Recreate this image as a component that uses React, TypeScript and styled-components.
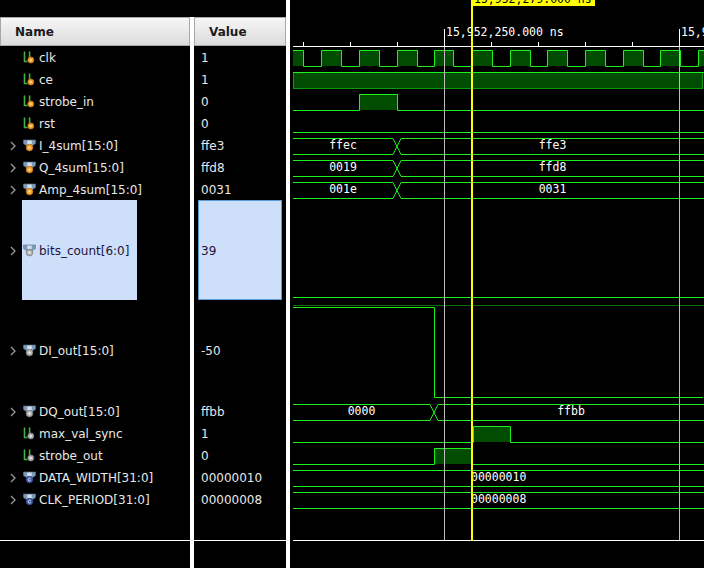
import React from 'react';
import styled, { createGlobalStyle } from 'styled-components';

const GlobalStyle = createGlobalStyle`
  html, body { margin: 0; padding: 0; background: #000; }
  body { font-family: 'DejaVu Sans', 'Liberation Sans', sans-serif; }
`;

type Kind = 'bitIn' | 'bitInt' | 'busIn' | 'busInt' | 'param';
interface Sig {
  name: string;
  value: string;
  kind: Kind;
  tall?: boolean;
  selected?: boolean;
}

const signals: Sig[] = [
  { name: 'clk', value: '1', kind: 'bitIn' },
  { name: 'ce', value: '1', kind: 'bitIn' },
  { name: 'strobe_in', value: '0', kind: 'bitIn' },
  { name: 'rst', value: '0', kind: 'bitIn' },
  { name: 'I_4sum[15:0]', value: 'ffe3', kind: 'busIn' },
  { name: 'Q_4sum[15:0]', value: 'ffd8', kind: 'busIn' },
  { name: 'Amp_4sum[15:0]', value: '0031', kind: 'busIn' },
  { name: 'bits_count[6:0]', value: '39', kind: 'busInt', tall: true, selected: true },
  { name: 'DI_out[15:0]', value: '-50', kind: 'busInt', tall: true },
  { name: 'DQ_out[15:0]', value: 'ffbb', kind: 'busInt' },
  { name: 'max_val_sync', value: '1', kind: 'bitInt' },
  { name: 'strobe_out', value: '0', kind: 'bitInt' },
  { name: 'DATA_WIDTH[31:0]', value: '00000010', kind: 'param' },
  { name: 'CLK_PERIOD[31:0]', value: '00000008', kind: 'param' },
];

const Page = styled.div`
  display: flex;
  width: 704px;
  height: 568px;
  background: #000;
  overflow: hidden;
`;

const Column = styled.div<{ $width: number }>`
  display: flex;
  flex-direction: column;
  flex: none;
  width: ${(p) => p.$width}px;
  padding-top: 17px;
  box-sizing: border-box;
`;

const HeaderCell = styled.div`
  height: 29px;
  box-sizing: border-box;
  border: 1px solid #a8a8a8;
  background: linear-gradient(#f6f6f6, #dcdcdc);
  display: flex;
  align-items: center;
  padding-left: 14px;
  font-weight: bold;
  font-size: 12px;
  color: #1a1a1a;
`;

const Divider = styled.div<{ $top: number }>`
  flex: none;
  width: 4px;
  margin-top: ${(p) => p.$top}px;
  background: #ffffff;
`;

const NameRow = styled.div<{ $h: number }>`
  display: flex;
  align-items: stretch;
  height: ${(p) => p.$h}px;
  padding-left: 9px;
`;

const Expander = styled.div`
  flex: none;
  width: 13px;
  display: flex;
  align-items: center;
  padding-top: 2px;
  box-sizing: border-box;
  svg { margin-left: 1px; }
`;

const NameLabel = styled.div<{ $selected?: boolean }>`
  display: flex;
  align-items: center;
  gap: 3px;
  padding: 2px 8px 0 1px;
  background: ${(p) => (p.$selected ? '#cddff9' : 'transparent')};
  color: ${(p) => (p.$selected ? '#1e1440' : '#e8e8e8')};
  font-size: 12px;
  white-space: nowrap;
  svg { flex: none; margin-top: -2px; }
`;

const ValueRow = styled.div<{ $h: number }>`
  display: flex;
  height: ${(p) => p.$h}px;
  padding: 0 4px;
`;

const ValueBox = styled.div<{ $selected?: boolean }>`
  flex: 1;
  display: flex;
  align-items: center;
  padding: 2px 0 0 2px;
  border: 1px solid ${(p) => (p.$selected ? '#5a9bd6' : 'transparent')};
  background: ${(p) => (p.$selected ? '#cddff9' : 'transparent')};
  color: ${(p) => (p.$selected ? '#1e1440' : '#e8e8e8')};
  font-size: 12px;
  white-space: nowrap;
`;

const BottomRule = styled.div`
  margin-top: 30px;
  height: 1px;
  background: #ffffff;
`;

const WavePane = styled.div`
  flex: 1;
  svg { display: block; }
`;

const WaveText = styled.text<{ $color?: string }>`
  font-family: 'DejaVu Sans Mono', 'Liberation Mono', monospace;
  font-size: 11.5px;
  fill: ${(p) => p.$color || '#ffffff'};
`;

const dots = {
  orange: { fill: '#f4a232', stroke: '#c9740e', inner: '#ffe0a0' },
  gray: { fill: '#b4b4b4', stroke: '#7c7c7c', inner: '#eeeeee' },
};

function SignalIcon({ kind }: { kind: Kind }) {
  if (kind === 'bitIn' || kind === 'bitInt') {
    const d = kind === 'bitIn' ? dots.orange : dots.gray;
    return (
      <svg width="13" height="13" viewBox="0 0 13 13">
        <path d="M1.5 0.5 V10.5 H4.5" stroke="#45b045" strokeWidth="1.6" fill="none" />
        <path d="M6.6 0.5 V6" stroke="#45b045" strokeWidth="1.6" fill="none" />
        <circle cx="7.8" cy="9" r="3" fill={d.fill} stroke={d.stroke} strokeWidth="0.8" />
        <circle cx="7.8" cy="9" r="1.1" fill={d.inner} />
      </svg>
    );
  }
  const d = kind === 'busIn' ? dots.orange : dots.gray;
  return (
    <svg width="13" height="13" viewBox="0 0 13 13">
      <path d="M0.5 1 H12.5 V4.6 L9.6 6.6 H3.4 L0.5 4.6 Z" fill="#7d9ab8" stroke="#5b7896" strokeWidth="0.6" />
      <rect x="4.3" y="1.6" width="4.4" height="3.4" fill="#d4e0ec" />
      {kind === 'param' ? (
        <>
          <circle cx="6.5" cy="8.6" r="3.3" fill="#4262aa" stroke="#2b458a" strokeWidth="0.7" />
          <path d="M7.7 7.8 A1.4 1.4 0 1 0 7.7 9.5" stroke="#e4ecff" strokeWidth="0.9" fill="none" />
        </>
      ) : (
        <>
          <circle cx="6.5" cy="8.6" r="3.3" fill={d.fill} stroke={d.stroke} strokeWidth="0.8" />
          <circle cx="6.5" cy="8.6" r="1.2" fill={d.inner} />
        </>
      )}
    </svg>
  );
}

function Chevron() {
  return (
    <svg width="6" height="10" viewBox="0 0 6 10">
      <polyline points="1,1 5,5 1,9" stroke="#9a9a9a" strokeWidth="1.3" fill="none" />
    </svg>
  );
}

const X0 = 293;
const X1 = 704;
const G = '#1ef01e';
const FILL = '#004c00';

function stepPath(hi: number, lo: number, highs: [number, number][]) {
  const startHigh = highs.length > 0 && highs[0][0] <= X0;
  let d = `M${X0} ${(startHigh ? hi : lo) + 0.5}`;
  for (const [s, e] of highs) {
    if (s > X0) d += ` H${s + 0.5} V${hi + 0.5}`;
    d += ` H${Math.min(e, X1) + 0.5}`;
    if (e < X1) d += ` V${lo + 0.5}`;
  }
  d += ` H${X1}`;
  return d;
}

function Digital({ top, highs }: { top: number; highs: [number, number][] }) {
  const hi = top + 4;
  const lo = top + 20;
  return (
    <g>
      {highs.map(([s, e]) => (
        <rect key={s} x={s} y={hi} width={Math.min(e, X1) - s} height={lo - hi} fill={FILL} />
      ))}
      <path d={stepPath(hi, lo, highs)} stroke={G} strokeWidth="1" fill="none" />
    </g>
  );
}

function Bus({
  top,
  trans,
  values,
  textX,
}: {
  top: number;
  trans: number[];
  values: string[];
  textX?: number;
}) {
  const t = top + 4;
  const b = top + 20;
  const w = 8;
  const segs: [number, number][] = [];
  let s = X0;
  for (const x of trans) {
    segs.push([s, x]);
    s = x + w;
  }
  segs.push([s, X1]);
  let d = '';
  segs.forEach(([a, e]) => {
    d += ` M${a} ${t + 0.5} H${e} M${a} ${b + 0.5} H${e}`;
  });
  trans.forEach((x) => {
    d += ` M${x} ${t + 0.5} L${x + w} ${b + 0.5} M${x} ${b + 0.5} L${x + w} ${t + 0.5}`;
  });
  return (
    <g>
      <path d={d} stroke={G} strokeWidth="1" fill="none" />
      {segs.map(([a, e], i) =>
        textX !== undefined ? (
          <WaveText key={i} x={textX} y={t + 10.5}>
            {values[i]}
          </WaveText>
        ) : (
          <WaveText key={i} x={(a + e) / 2} y={t + 10.5} textAnchor="middle">
            {values[i]}
          </WaveText>
        )
      )}
    </g>
  );
}

const clkHighs: [number, number][] = [
  [293, 303], [321, 341], [359, 379], [397, 417], [434, 453], [472, 492],
  [510, 530], [547, 567], [585, 605], [623, 643], [660, 680], [698, 710],
];

const minorTicks = [303, 350, 397, 491, 538, 585, 632];
const majorTicks = [
  { x: 444, label: '15,952,250.000 ns' },
  { x: 679, label: '15,952,500.000 ns' },
];

function WaveView() {
  return (
    <svg width="414" height="568" viewBox="290 0 414 568">
      {/* ruler */}
      <path d={`M${X0} 46.5 H${X1}`} stroke="#ffffff" strokeWidth="1" />
      {minorTicks.map((x) => (
        <path key={x} d={`M${x + 0.5} 42 V46`} stroke="#ffffff" strokeWidth="1" />
      ))}
      {majorTicks.map((m) => (
        <g key={m.x}>
          <path d={`M${m.x + 0.5} 29 V46`} stroke="#ffffff" strokeWidth="1" />
          <WaveText x={m.x + 2} y={36}>
            {m.label}
          </WaveText>
        </g>
      ))}

      {/* clk */}
      <Digital top={46} highs={clkHighs} />
      {/* ce */}
      <rect x={X0 + 0.5} y={72.5} width={409} height={16} fill={FILL} stroke="#0b9a0b" strokeWidth="1" />
      <path d={`M${X0} 72.5 H${X1}`} stroke={G} strokeWidth="1" />
      {/* strobe_in */}
      <Digital top={90} highs={[[359, 397]]} />
      {/* rst */}
      <Digital top={112} highs={[]} />
      {/* buses */}
      <Bus top={134} trans={[393]} values={['ffec', 'ffe3']} />
      <Bus top={156} trans={[393]} values={['0019', 'ffd8']} />
      <Bus top={178} trans={[393]} values={['001e', '0031']} />
      {/* bits_count analog */}
      <path d={`M${X0} 297.5 H${X1}`} stroke={G} strokeWidth="1" />
      {/* DI_out analog */}
      <path d={`M${X0} 305.5 H${X1}`} stroke="#0e6e0e" strokeWidth="1" />
      <path d={`M${X0} 307.5 H434.5 V397.5 H703`} stroke={G} strokeWidth="1" fill="none" />
      {/* DQ_out */}
      <Bus top={400} trans={[430]} values={['0000', 'ffbb']} />
      {/* max_val_sync */}
      <Digital top={422} highs={[[473, 510]]} />
      {/* strobe_out */}
      <Digital top={444} highs={[[434, 471]]} />
      {/* params */}
      <Bus top={466} trans={[]} values={['00000010']} textX={471} />
      <Bus top={488} trans={[]} values={['00000008']} textX={471} />

      {/* grid lines */}
      <path d="M444.5 47 V540 M679.5 47 V540" stroke="#bdbdbd" strokeWidth="1" />

      {/* footer */}
      <path d={`M${X0} 540.5 H${X1}`} stroke="#ffffff" strokeWidth="1" />

      {/* cursor */}
      <rect x={471} y={0} width={2} height={541} fill="#ffff00" />
      <rect x={471} y={0} width={124} height={6} fill="#ffff00" />
      <WaveText x={474} y={3} $color="#000000">
        15,952,279.000 ns
      </WaveText>
    </svg>
  );
}

export default function App() {
  return (
    <>
      <GlobalStyle />
      <Page>
        <Column $width={190}>
          <HeaderCell>Name</HeaderCell>
          {signals.map((s) => (
            <NameRow key={s.name} $h={s.tall ? 100 : 22}>
              <Expander>{s.kind.startsWith('bit') ? null : <Chevron />}</Expander>
              <NameLabel $selected={s.selected}>
                <SignalIcon kind={s.kind} />
                {s.name}
              </NameLabel>
            </NameRow>
          ))}
          <BottomRule />
        </Column>
        <Divider $top={17} />
        <Column $width={92}>
          <HeaderCell>Value</HeaderCell>
          {signals.map((s) => (
            <ValueRow key={s.name} $h={s.tall ? 100 : 22}>
              <ValueBox $selected={s.selected}>{s.value}</ValueBox>
            </ValueRow>
          ))}
          <BottomRule />
        </Column>
        <Divider $top={0} />
        <WavePane>
          <WaveView />
        </WavePane>
      </Page>
    </>
  );
}
